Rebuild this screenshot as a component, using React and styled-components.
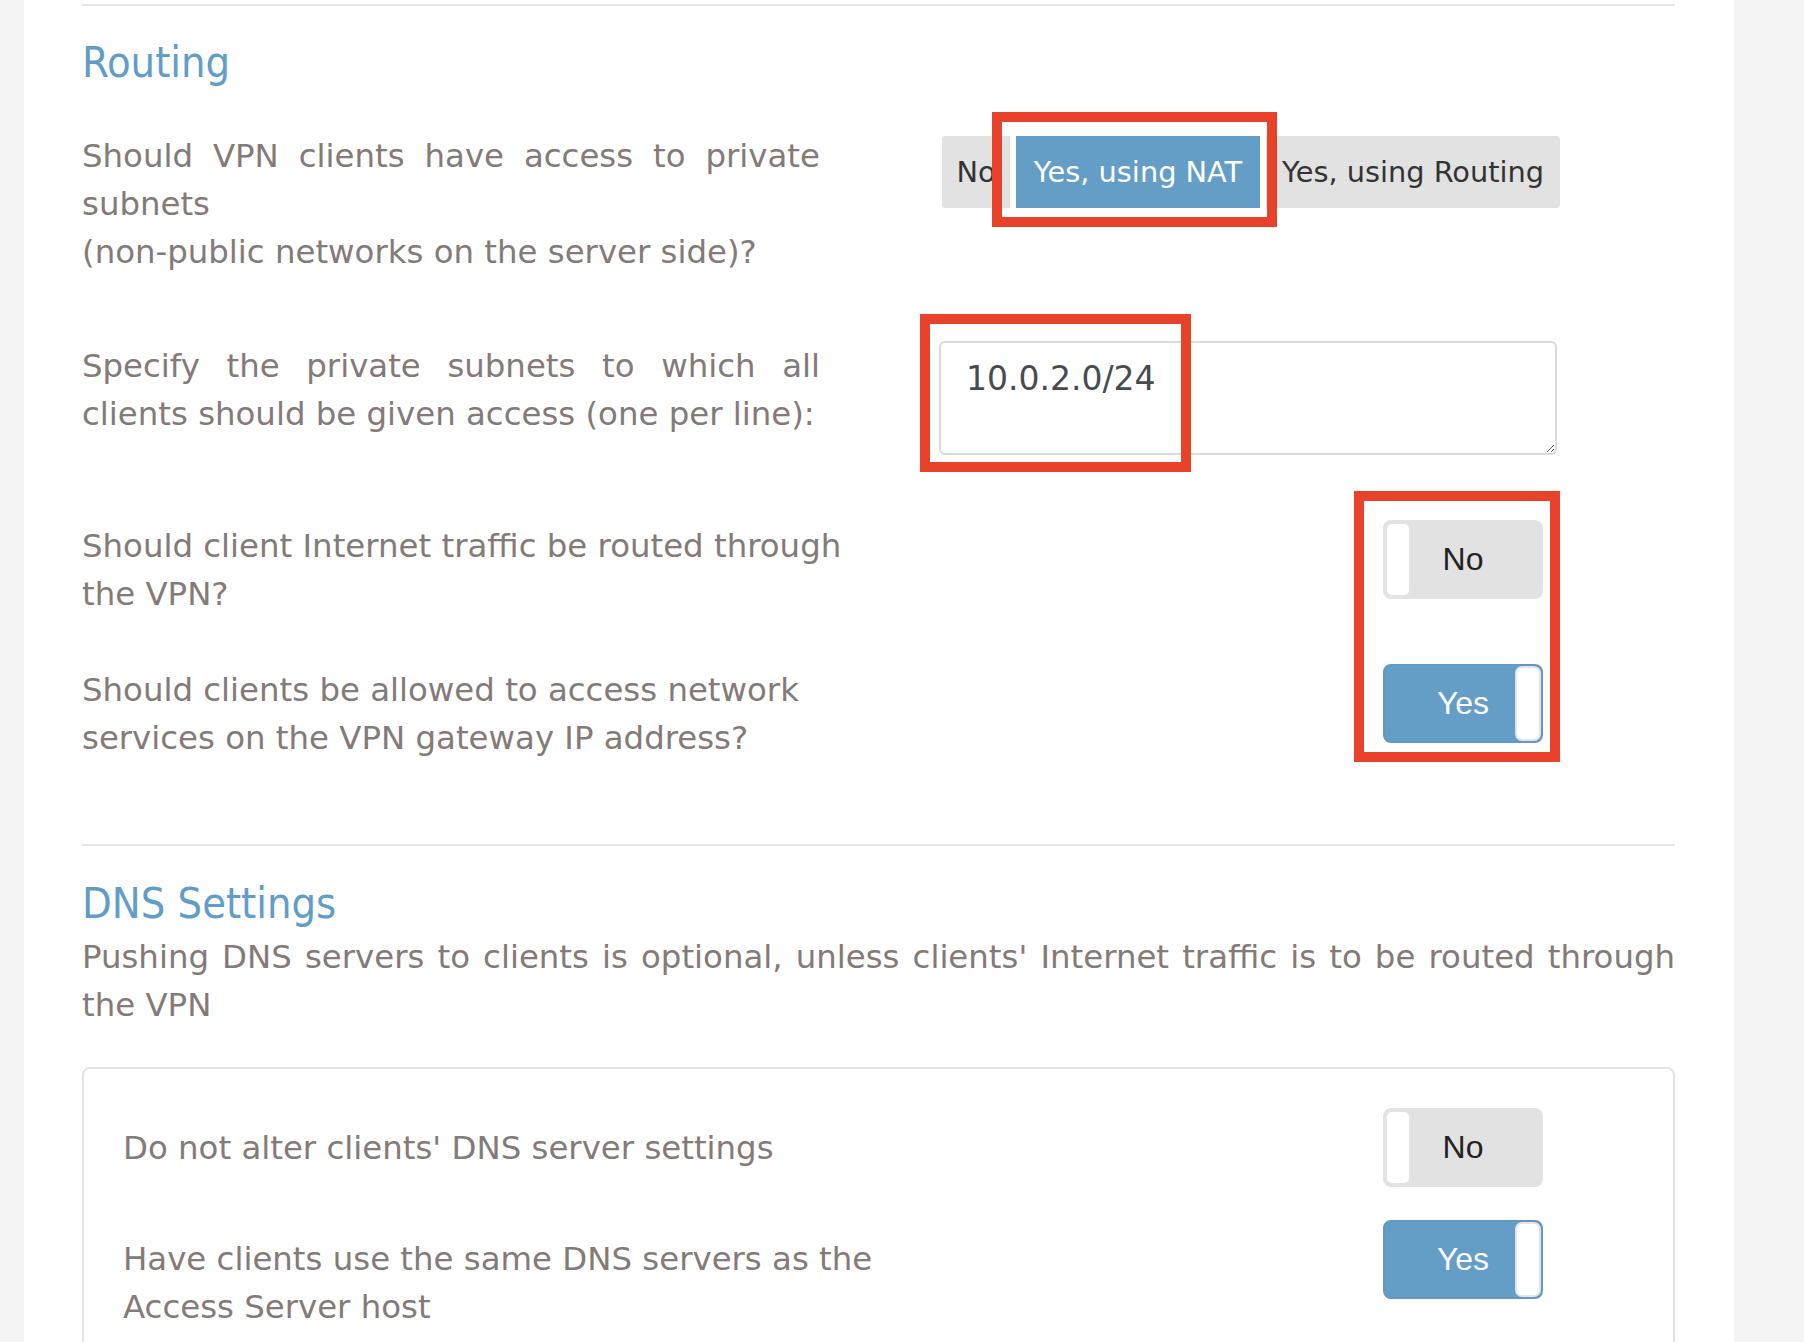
import React from 'react';
import styled, { createGlobalStyle } from 'styled-components';

const GlobalStyle = createGlobalStyle`
  html, body {
    margin: 0;
    padding: 0;
    background: #f4f4f4;
  }
  body {
    font-family: 'DejaVu Sans', Verdana, sans-serif;
    overflow: hidden;
  }
  * {
    box-sizing: border-box;
  }
`;

const Page = styled.div`
  position: relative;
  min-height: 100vh;
  padding: 0 70px 0 24px;
`;

const Card = styled.main`
  background: #fff;
  min-height: 100vh;
  padding: 4px 59px 40px 58px;
`;

const Divider = styled.hr`
  margin: ${(p) => p.$top || 0}px 0 0;
  border: 0;
  border-top: 2px solid #e6e6e6;
`;

const SectionTitle = styled.h2`
  margin: ${(p) => p.$top}px 0 0;
  font-family: 'DejaVu Sans Condensed', 'DejaVu Sans', sans-serif;
  font-stretch: condensed;
  font-weight: normal;
  font-size: 43px;
  line-height: 50px;
  color: #629dc8;
`;

const Text = styled.p`
  margin: ${(p) => p.$top || 0}px 0 0;
  font-size: 32.4px;
  line-height: 48px;
  color: #847a77;
  text-align: ${(p) => (p.$justify ? 'justify' : 'left')};
  max-width: ${(p) => (p.$width ? `${p.$width}px` : 'none')};
`;

const Row = styled.div`
  display: grid;
  grid-template-columns: 857px 622px;
  align-items: start;
  margin-top: ${(p) => p.$top}px;
`;

const Control = styled.div`
  display: flex;
  justify-content: ${(p) => (p.$end ? 'flex-end' : 'flex-start')};
  padding-right: ${(p) => (p.$end ? 18 : 0)}px;
  margin-top: ${(p) => p.$top || 0}px;
`;

const Segmented = styled.div`
  display: flex;
  gap: 6px;
  margin-left: 3px;
`;

const SegButton = styled.button`
  width: ${(p) => p.$width}px;
  height: 72px;
  padding: 0;
  border: 0;
  white-space: nowrap;
  overflow: hidden;
  font-family: 'DejaVu Sans', sans-serif;
  font-size: 28.8px;
  text-align: center;
  background: ${(p) => (p.$active ? '#649ec7' : '#e2e2e2')};
  color: ${(p) => (p.$active ? '#fff' : '#333')};
  &:first-child {
    border-radius: 4px 0 0 4px;
  }
  &:last-child {
    border-radius: 0 4px 4px 0;
  }
`;

const SubnetArea = styled.textarea`
  display: block;
  width: 618px;
  height: 114px;
  padding: 15px 25px;
  border: 2px solid #dadada;
  border-radius: 6px;
  font-family: 'DejaVu Sans', sans-serif;
  font-size: 33px;
  line-height: 42px;
  color: #464b50;
  resize: vertical;
  outline: none;
`;

const Track = styled.div`
  position: relative;
  width: 160px;
  height: 79px;
  border: 2px solid ${(p) => (p.$on ? '#6199c2' : '#e3e3e3')};
  border-radius: 8px;
  background: ${(p) => (p.$on ? '#649ec7' : '#e2e2e2')};
  display: flex;
  align-items: center;
  justify-content: center;
  font-family: 'Liberation Sans', Arial, sans-serif;
  font-size: 32px;
  color: ${(p) => (p.$on ? '#fff' : '#222')};
`;

const Knob = styled.span`
  position: absolute;
  top: 0;
  bottom: 0;
  ${(p) => (p.$on ? 'right: 0;' : 'left: 0;')}
  width: 26px;
  background: #fff;
  border: 2px solid #e4e4e4;
  border-radius: 7px;
`;

const Panel = styled.section`
  margin-top: 38px;
  border: 2px solid #e4e4e4;
  border-radius: 8px;
  padding: 39px 130px 60px 39px;
`;

const PanelRow = styled.div`
  display: flex;
  justify-content: space-between;
  align-items: ${(p) => (p.$center ? 'center' : 'flex-start')};
  margin-top: ${(p) => p.$top || 0}px;
`;

const Highlight = styled.div`
  position: absolute;
  left: ${(p) => p.$x}px;
  top: ${(p) => p.$y}px;
  width: ${(p) => p.$w}px;
  height: ${(p) => p.$h}px;
  border: 10px solid #e8422a;
  pointer-events: none;
`;

function Toggle({ on }) {
  return (
    <Track $on={on}>
      <Knob $on={on} />
      {on ? 'Yes' : 'No'}
    </Track>
  );
}

export default function App() {
  return (
    <Page>
      <GlobalStyle />
      <Card>
        <Divider />
        <SectionTitle $top={31}>Routing</SectionTitle>

        <Row $top={45}>
          <Text $justify $width={738}>
            Should VPN clients have access to private subnets
            <br />
            (non-public networks on the server side)?
          </Text>
          <Control $top={4}>
            <Segmented>
              <SegButton $width={68}>No</SegButton>
              <SegButton $width={244} $active>Yes, using NAT</SegButton>
              <SegButton $width={294}>Yes, using Routing</SegButton>
            </Segmented>
          </Control>
        </Row>

        <Row $top={65}>
          <Text $justify $width={738} $top={1}>
            Specify the private subnets to which all clients should be given access (one per line):
          </Text>
          <Control>
            <SubnetArea defaultValue="10.0.2.0/24" spellCheck={false} />
          </Control>
        </Row>

        <Row $top={65}>
          <Text $width={790} $top={2}>
            Should client Internet traffic be routed through the VPN?
          </Text>
          <Control $end>
            <Toggle on={false} />
          </Control>
        </Row>

        <Row $top={46}>
          <Text $width={790} $top={2}>
            Should clients be allowed to access network services on the VPN gateway IP address?
          </Text>
          <Control $end>
            <Toggle on />
          </Control>
        </Row>

        <Divider $top={82} />
        <SectionTitle $top={32}>DNS Settings</SectionTitle>
        <Text $justify $top={5}>
          Pushing DNS servers to clients is optional, unless clients' Internet traffic is to be routed through the VPN
        </Text>

        <Panel>
          <PanelRow $center>
            <Text>Do not alter clients' DNS server settings</Text>
            <Toggle on={false} />
          </PanelRow>
          <PanelRow $top={33}>
            <Text $width={790} $top={15}>
              Have clients use the same DNS servers as the Access Server host
            </Text>
            <Toggle on />
          </PanelRow>
        </Panel>
      </Card>

      <Highlight $x={992} $y={112} $w={285} $h={115} />
      <Highlight $x={920} $y={314} $w={271} $h={158} />
      <Highlight $x={1354} $y={491} $w={206} $h={271} />
    </Page>
  );
}
